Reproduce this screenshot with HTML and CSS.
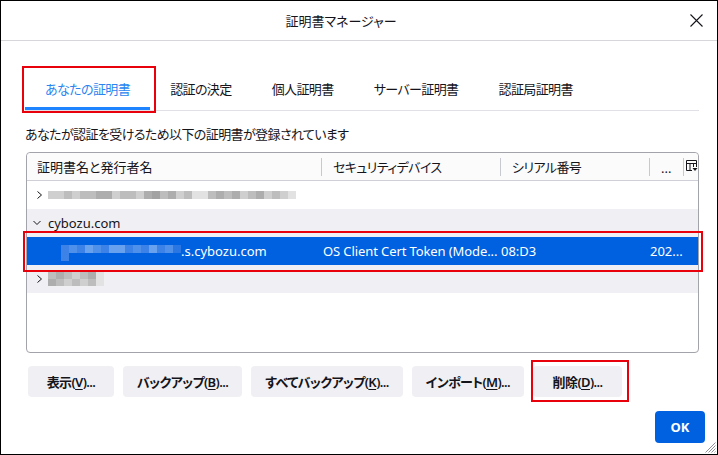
FILE: index.html
```html
<!DOCTYPE html>
<html lang="ja">
<head>
    <meta charset="UTF-8">
    <title>証明書マネージャー</title>
    <link rel="stylesheet" href="styles.css">
</head>
<body>
    <div class="dialog">
        <div class="titlebar">
            <div class="title">証明書マネージャー</div>
            <button class="close" aria-label="閉じる">
                <svg width="13" height="13" viewBox="0 0 13 13"><path d="M0.5 0.5 L12.5 12.5 M12.5 0.5 L0.5 12.5" stroke="#15141a" stroke-width="1.1" fill="none"/></svg>
            </button>
        </div>

        <div class="content">
            <div class="tabs">
                <div class="tab active marked">あなたの証明書</div>
                <div class="tab">認証の決定</div>
                <div class="tab">個人証明書</div>
                <div class="tab">サーバー証明書</div>
                <div class="tab">認証局証明書</div>
            </div>

            <p class="caption">あなたが認証を受けるため以下の証明書が登録されています</p>

            <div class="tree">
                <div class="tree-head">
                    <div class="col">証明書名と発行者名</div>
                    <div class="col">セキュリティデバイス</div>
                    <div class="col">シリアル番号</div>
                    <div class="col dots">...</div>
                    <div class="col picker">
                        <svg width="12" height="13" viewBox="0 0 12 13"><path d="M0.5 0.5 H10.5 V7 M0.5 0.5 V10.5 H6 M0.5 3.5 H10.5 M4 3.5 V10.5 M7.5 3.5 V7" stroke="#15141a" fill="none"/><path d="M6.5 8 H11.5 L9 11 Z" fill="#15141a"/></svg>
                    </div>
                </div>

                <!-- collapsed issuer -->
                <div class="row">
                    <div class="cell name">
                        <span class="twisty"><svg width="15" height="10" viewBox="0 0 15 10"><path d="M4.5 1.5 L8.5 5 L4.5 8.5" stroke="#15141a" fill="none"/></svg></span>
                        <span class="blur">
                            <i class="k1"></i><i class="k1"></i><i class="k2"></i><i class="k1"></i><i class="k2"></i><i class="k2"></i><i class="k3"></i><i class="k3"></i><i class="k1"></i><i class="k2"></i><i class="k2"></i><i class="k1"></i><i class="k3"></i><i class="k5"></i><i class="k2"></i><i class="k3"></i><i class="k1"></i><i class="k2"></i><i class="k4"></i><i class="k4"></i><i class="k2"></i><i class="k3"></i><i class="k2"></i><i class="k3"></i><i class="k1"></i><i class="k2"></i><i class="k3"></i><i class="k1"></i><i class="k2"></i><i class="k1"></i><i class="k4"></i>
                        </span>
                    </div>
                </div>

                <div class="row even">
                    <div class="cell name">
                        <span class="twisty"><svg width="15" height="10" viewBox="0 0 15 10"><path d="M0.5 3 L4 6.5 L7.5 3" stroke="#15141a" fill="none"/></svg></span>
                        <span>cybozu.com</span>
                    </div>
                </div>

                <div class="row selected marked-row">
                    <div class="cell name child">
                        <span class="blur blue">
                            <i class="b2"></i><i class="b1"></i><i class="b2"></i><i class="b3"></i><i class="b1"></i><i class="b2"></i><i class="b3"></i><i class="b3"></i><i class="b2"></i><i class="b1"></i><i class="b2"></i><i class="b3"></i><i class="b2"></i><i class="b1"></i><i class="b4"></i>
                            <i class="b2"></i>
                        </span>
                        <span>.s.cybozu.com</span>
                    </div>
                    <div class="cell device">OS Client Cert Token (Mode...</div>
                    <div class="cell">08:D3</div>
                    <div class="cell">202...</div>
                    <div class="cell"></div>
                </div>

                <div class="row even">
                    <div class="cell name">
                        <span class="twisty"><svg width="15" height="10" viewBox="0 0 15 10"><path d="M4.5 1.5 L8.5 5 L4.5 8.5" stroke="#15141a" fill="none"/></svg></span>
                        <span class="blur small">
                            <i class="k2"></i><i class="k3"></i><i class="k2"></i><i class="k1"></i><i class="k2"></i><i class="k3"></i><i class="k4"></i>
                            <i class="k3"></i><i class="k2"></i><i class="k1"></i><i class="k2"></i><i class="k1"></i><i class="k2"></i><i class="k4"></i>
                        </span>
                    </div>
                </div>
            </div>

            <div class="actions">
                <button class="btn">表示(<u>V</u>)...</button>
                <button class="btn">バックアップ(<u>B</u>)...</button>
                <button class="btn">すべてバックアップ(<u>K</u>)...</button>
                <button class="btn">インポート(<u>M</u>)...</button>
                <button class="btn marked-btn">削除(<u>D</u>)...</button>
            </div>
        </div>

        <div class="footer">
            <button class="ok">OK</button>
        </div>

        <svg class="grip" width="12" height="12" viewBox="0 0 12 12"><path d="M11.5 1.5 L1.5 11.5 M11.5 4.5 L4.5 11.5 M11.5 7.5 L7.5 11.5 M11.5 10.5 L10.5 11.5" stroke="#8f8f9d" fill="none"/></svg>
    </div>
</body>
</html>
```

FILE: styles.css
```css
* {
    box-sizing: border-box;
}
body {
    margin: 0;
    font-family: "Noto Sans", "Noto Sans CJK JP", sans-serif;
    font-size: 13px;
    color: #15141a;
    background: #fff;
    font-feature-settings: "palt";
}
button {
    font-family: inherit;
    font-feature-settings: "palt";
}
.dialog {
    position: relative;
    width: 718px;
    height: 455px;
    border: 1px solid #000;
    display: flex;
    flex-direction: column;
    overflow: hidden;
}
.titlebar {
    height: 40px;
    border-bottom: 1px solid #d7d7db;
    display: flex;
    align-items: center;
}
.title {
    flex: 1;
    text-align: center;
    line-height: 18px;
}
.close {
    width: 30px;
    height: 30px;
    margin-right: 6px;
    border: none;
    background: none;
    padding: 0;
    display: flex;
    align-items: center;
    justify-content: center;
}
.content {
    padding: 0 18px 0 24px;
}
.tabs {
    display: flex;
    margin-top: 27px;
    border-bottom: 1px solid #e0e0e6;
}
.tab {
    position: relative;
    height: 42px;
    padding: 0 20px;
    display: flex;
    align-items: center;
    line-height: 18px;
    letter-spacing: -0.6px;
}
.tab.active {
    color: #2a85f0;
}
.tab.active::before {
    content: "";
    position: absolute;
    left: 0;
    right: 0;
    bottom: 0;
    height: 3px;
    background: #1f84ff;
}
.marked::after {
    content: "";
    position: absolute;
    left: -3px;
    right: -6px;
    top: -2px;
    bottom: -3px;
    border: 2px solid #e8000b;
}
.caption {
    margin: 14px 0 9px;
    line-height: 18px;
    letter-spacing: -0.6px;
}
.tree {
    margin-left: 1px;
    height: 201px;
    border: 1px solid #a3a3ab;
    border-radius: 4px;
}
.tree-head,
.row {
    display: grid;
    grid-template-columns: 294px 179px 149px 34px 1fr;
}
.tree-head {
    height: 28px;
    align-items: center;
    border-bottom: 1px solid #cfcfd8;
    background: #fbfbfc;
    border-radius: 4px 4px 0 0;
    letter-spacing: -0.6px;
}
.tree-head .col {
    height: 18px;
    line-height: 18px;
    padding-left: 11px;
    white-space: nowrap;
}
.tree-head .col:first-child {
    padding-left: 10px;
    letter-spacing: 0;
}
.tree-head .col + .col {
    border-left: 1px solid #c8c8d0;
}
.tree-head .dots {
    line-height: 20px;
    letter-spacing: 0;
}
.tree-head .picker {
    padding-left: 2px;
    display: flex;
    align-items: center;
}
.row {
    height: 28px;
    align-items: center;
}
.row.even {
    background: #f0f0f4;
}
.row.selected {
    background: #0061e0;
    color: #fff;
}
.cell {
    padding-left: 1px;
    white-space: nowrap;
    overflow: hidden;
    line-height: 18px;
}
.cell.device {
    padding-left: 2px;
    letter-spacing: -0.1px;
}
.cell.name {
    display: flex;
    align-items: center;
    padding-left: 6px;
}
.cell.child {
    padding-left: 34px;
}
.twisty {
    width: 15px;
    height: 10px;
    display: flex;
}
.blur {
    display: flex;
    height: 8px;
}
.blur i {
    width: 8px;
    height: 8px;
}
.blur.blue {
    display: grid;
    grid-template-columns: repeat(15, 8px);
    height: 16px;
    margin-top: 3px;
}
.blur.small {
    display: grid;
    grid-template-columns: repeat(7, 8px);
    height: 14px;
}
.blur.small i {
    height: 7px;
}
.k1 { background: #cfcfcf; }
.k2 { background: #bdbdbd; }
.k3 { background: #adadad; }
.k4 { background: #e2e2e2; }
.k5 { background: #a2a2a2; }
.b1 { background: #4f90ea; }
.b2 { background: #3d82e6; }
.b3 { background: #68a2ee; }
.b4 { background: #2a76e3; }
.marked-row {
    position: relative;
}
.marked-row::after {
    content: "";
    position: absolute;
    left: -4px;
    right: -5px;
    top: -6px;
    bottom: -7px;
    border: 2px solid #e8000b;
    pointer-events: none;
}
.actions {
    display: flex;
    gap: 9px;
    margin: 13px 0 0 3px;
}
.btn {
    position: relative;
    min-width: 86px;
    height: 31px;
    padding: 0 14px;
    border: none;
    border-radius: 4px;
    background: #f0f0f4;
    color: #15141a;
    font-size: 13px;
    font-weight: 600;
    letter-spacing: -0.6px;
}
.btn u {
    text-underline-offset: 2px;
}
.marked-btn {
    min-width: 89px;
}
.marked-btn::after {
    content: "";
    position: absolute;
    left: -2px;
    right: -7px;
    top: -6px;
    bottom: -5px;
    border: 2px solid #e8000b;
}
.footer {
    display: flex;
    justify-content: flex-end;
    margin-top: 14px;
    padding-right: 12px;
}
.ok {
    width: 50px;
    height: 32px;
    border: none;
    border-radius: 4px;
    background: #0061e0;
    color: #fff;
    font-size: 13px;
    font-weight: 700;
}
.grip {
    position: absolute;
    right: 1px;
    bottom: 1px;
}
```
